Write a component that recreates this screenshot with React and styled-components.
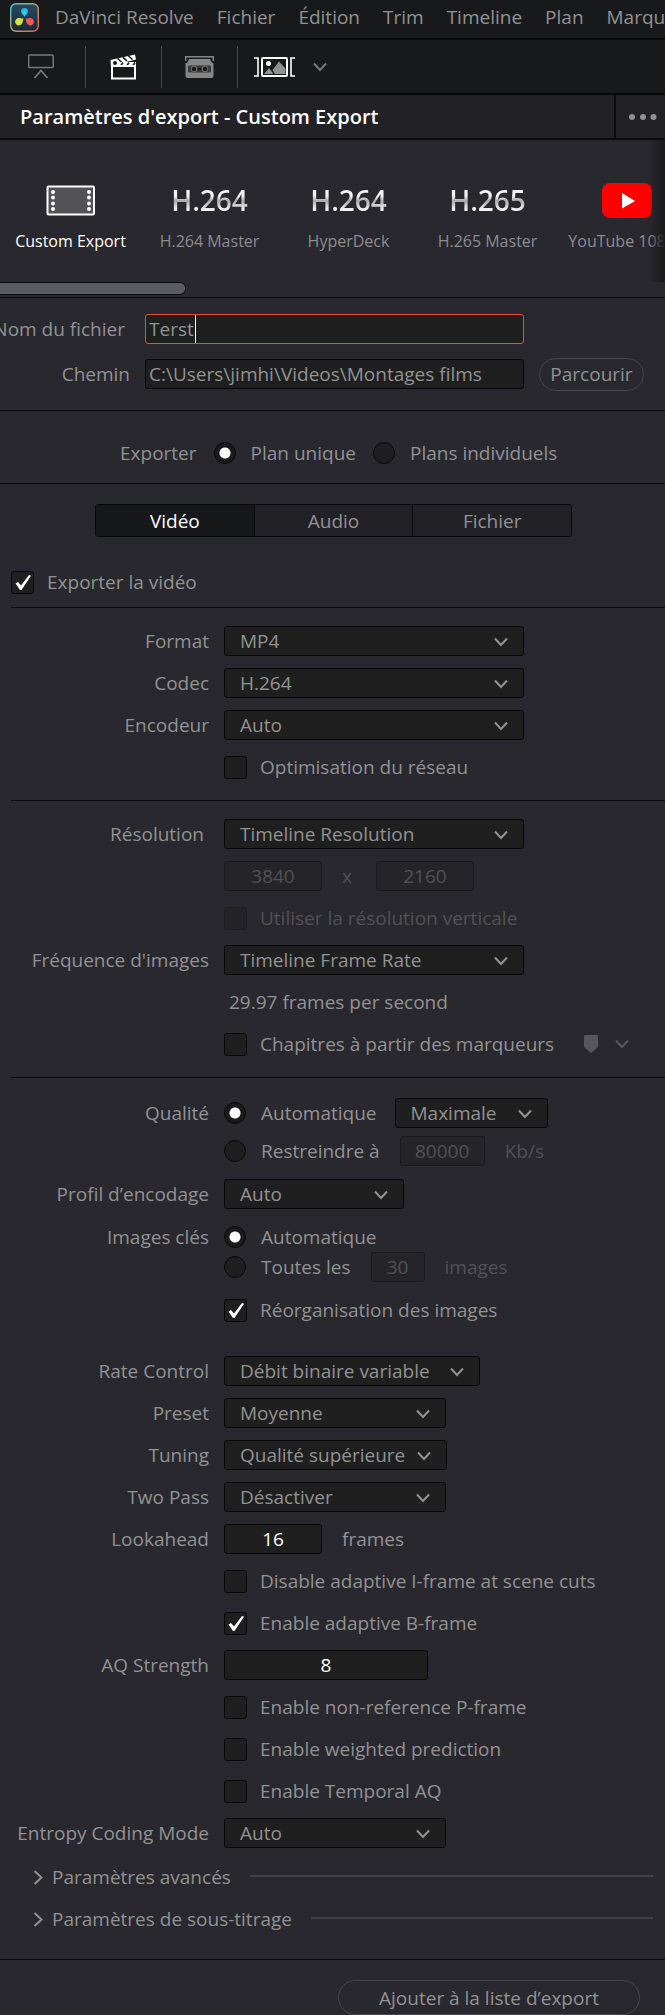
import React, { useId, useState } from 'react'
import styled, { createGlobalStyle, css } from 'styled-components'

const GlobalStyle = createGlobalStyle`
  * {
    box-sizing: border-box;
  }

  body {
    margin: 0;
    background: #28282e;
    color: #929292;
    font-family: 'Open Sans', 'Noto Sans', sans-serif;
    font-size: 19px;
    line-height: 30px;
    overflow-x: hidden;
  }

  button,
  input,
  select {
    font: inherit;
    color: inherit;
    margin: 0;
  }
`

const Page = styled.div`
  min-height: 100vh;
  overflow: hidden;
`

const MenuBar = styled.nav`
  display: flex;
  align-items: center;
  gap: 23px;
  height: 40px;
  padding: 0 0 4px 10px;
  background: #18191a;
  border-bottom: 2px solid #090909;
  white-space: nowrap;
  overflow: hidden;
`

const MenuLogo = styled.svg`
  flex: none;
  width: 29px;
  height: 29px;
  margin-right: -7px;
`

const MenuItem = styled.a`
  color: #929292;
  text-decoration: none;
`

const Toolbar = styled.div`
  display: flex;
  align-items: center;
  height: 55px;
  background: #18191a;
  border-bottom: 2px solid #090909;
`

const ToolButton = styled.button`
  display: flex;
  align-items: center;
  justify-content: center;
  gap: 18px;
  width: ${(props) => (props.$wide ? '104px' : '76px')};
  height: 42px;
  padding: 0 0 0 ${(props) => (props.$wide ? '2px' : '0')};
  border: 0;
  border-left: ${(props) => (props.$first ? '0' : '1px solid #48484a')};
  background: none;

  &:first-child {
    width: 85px;
    padding-right: 4px;
  }
`

const TitleBar = styled.header`
  display: flex;
  align-items: stretch;
  height: 45px;
  background: #222126;
  border-bottom: 2px solid #0c0c0e;
`

const Title = styled.h1`
  flex: 1;
  margin: 0;
  padding: 7px 20px;
  color: #fff;
  font-size: 20px;
  font-weight: 600;
  line-height: 30px;
`

const MoreButton = styled.button`
  display: flex;
  align-items: center;
  justify-content: center;
  width: 51px;
  padding: 0 0 0 4px;
  border: 0;
  border-left: 2px solid #0c0c0e;
  background: none;
`

const Presets = styled.div`
  position: relative;
  height: 142px;
  overflow: hidden;
`

const PresetList = styled.div`
  display: flex;
  padding: 40px 0 0 1px;
`

const Preset = styled.button`
  display: flex;
  flex: none;
  flex-direction: column;
  align-items: center;
  gap: 9px;
  width: 139px;
  padding: 0;
  border: 0;
  background: none;
  color: ${(props) => (props.$active ? '#fff' : '#8c8c8e')};
  font-size: 16px;
  line-height: 24px;
  white-space: nowrap;
`

const PresetIcon = styled.span`
  display: flex;
  align-items: center;
  height: 40px;
`

const CodecName = styled.span`
  font-size: 28px;
  font-weight: 600;
  line-height: 40px;
  color: transparent;
  background: linear-gradient(#f4f4f4 40%, #a8a8a8 52%, #f0f0f0 72%);
  background-clip: text;
`

const PresetFade = styled.div`
  position: absolute;
  top: 0;
  right: 0;
  bottom: 0;
  width: 16px;
  background: linear-gradient(to right, rgba(24, 24, 26, 0), #1a1a1c);
`

const ScrollTrack = styled.div`
  height: 16px;
  border-bottom: 1px solid #0c0c0e;
`

const ScrollThumb = styled.div`
  width: 28%;
  height: 13px;
  border: 1px solid #0c0c0e;
  border-left: 0;
  border-radius: 0 6px 6px 0;
  background: #595d62;
`

const Target = styled.section`
  display: flex;
  flex-direction: column;
  gap: 15px;
  padding: 16px 0 21px;
  border-bottom: 1px solid #0c0c0e;
`

const Row = styled.div`
  display: flex;
  align-items: center;
  height: 30px;
  white-space: nowrap;
`

const Label = styled.label`
  display: flex;
  flex: none;
  justify-content: flex-end;
  width: ${(props) => (props.$narrow ? '145px' : '224px')};
  padding-right: ${(props) => (props.$loose ? '20px' : '15px')};
`

const fieldStyle = css`
  height: 30px;
  border: 1px solid #08080a;
  border-radius: 3px;
  background: #1f1f1f;
  line-height: 28px;
  outline: none;
`

const Field = styled.div`
  position: relative;
  display: flex;
  width: 379px;
`

const TextInput = styled.input`
  ${fieldStyle}
  width: 100%;
  padding: 0 3px;
  border-color: ${(props) => (props.$focused ? '#e64b3d' : '#08080a')};
  caret-color: transparent;
`

const Caret = styled.span`
  position: absolute;
  top: 1px;
  bottom: 1px;
  left: 50px;
  width: 1px;
  background: #fff;
`

const NumberInput = styled.input`
  ${fieldStyle}
  width: ${(props) => props.$width};
  padding: 0;
  color: #fff;
  text-align: center;

  &:disabled {
    border-color: #1b1b1f;
    background: #252529;
    color: #515155;
  }
`

const PillButton = styled.button`
  height: ${(props) => (props.$large ? '35px' : '33px')};
  width: ${(props) => (props.$large ? '302px' : '105px')};
  padding: 0;
  border: 1px solid #43464b;
  border-radius: 18px;
  background: none;
  line-height: 28px;
`

const BrowseButton = styled(PillButton)`
  margin-left: 15px;
`

const ModeRow = styled.section`
  display: flex;
  align-items: center;
  gap: 17px;
  height: 73px;
  padding: 12px 0 0 120px;
  border-bottom: 1px solid #0c0c0e;
  white-space: nowrap;
`

const Choice = styled.label`
  display: flex;
  align-items: center;
  gap: ${(props) => (props.$radio ? '15px' : '13px')};
  color: ${(props) => (props.$disabled ? '#515155' : 'inherit')};
`

const RadioInput = styled.input`
  appearance: none;
  flex: none;
  width: 22px;
  height: 22px;
  border: 1px solid #08080a;
  border-radius: 50%;
  background: #1f1f1f;

  &:checked {
    background: radial-gradient(circle, #fff 5px, #1a1a1a 6px);
  }
`

const BoxWrap = styled.span`
  display: grid;
  flex: none;
  width: 23px;
  height: 23px;

  > * {
    grid-area: 1 / 1;
  }
`

const BoxInput = styled.input`
  appearance: none;
  width: 23px;
  height: 23px;
  border: 1px solid #08080a;
  border-radius: 3px;
  background: #1f1f1f;

  &:disabled {
    border-color: #1f1f23;
    background: #242428;
  }
`

const Tick = styled.svg`
  width: 23px;
  height: 23px;
  pointer-events: none;
`

const Tabs = styled.div`
  display: flex;
  width: calc(100% - 188px);
  height: 33px;
  margin: 20px 93px 0 95px;
  border: 1px solid #08080a;
  border-radius: 3px;
  overflow: hidden;
`

const Tab = styled.button`
  flex: 1;
  padding: 0;
  border: 0;
  border-left: 1px solid #0c0c0e;
  background: ${(props) => (props.$active ? '#17181a' : '#222126')};
  color: ${(props) => (props.$active ? '#fff' : 'inherit')};
  line-height: 30px;

  &:first-child {
    border-left: 0;
  }
`

const Master = styled.div`
  display: flex;
  align-items: center;
  height: 41px;
  margin: 30px 0 0 11px;
  padding-bottom: 10px;
  border-bottom: 1px solid #0c0c0e;
`

const Settings = styled.section`
  display: flex;
  flex-direction: column;
  gap: ${(props) => (props.$last ? '13px' : '12px')};
  margin-left: ${(props) => (props.$last ? '0' : '11px')};
  padding: ${(props) => (props.$last ? '20px 0 26px' : '18px 0')};
  border-bottom: 1px solid #0c0c0e;

  ${Label} {
    margin-left: ${(props) => (props.$last ? '0' : '-11px')};
  }
`

const Group = styled.div`
  display: flex;
  flex-direction: column;
  gap: ${(props) => props.$gap};
`

const Encoder = styled(Group)`
  margin-top: 18px;
`

const SelectWrap = styled.div`
  position: relative;
  width: ${(props) => props.$width};

  svg {
    position: absolute;
    top: 11px;
    right: 16px;
    pointer-events: none;
  }
`

const SelectInput = styled.select`
  ${fieldStyle}
  appearance: none;
  width: 100%;
  padding: 0 10px 0 15px;
`

const Aside = styled.span`
  margin-left: 20px;
  color: ${(props) => (props.$dim ? '#515155' : 'inherit')};
`

const Inline = styled.div`
  display: flex;
  margin-left: ${(props) => props.$gap};
`

const Note = styled.span`
  padding-left: 5px;
`

const MarkerButton = styled.button`
  display: flex;
  align-items: center;
  gap: 15px;
  margin-left: 29px;
  padding: 0;
  border: 0;
  background: none;
`

const Disclosure = styled.button`
  display: flex;
  align-items: center;
  gap: 9px;
  height: 30px;
  padding: 2px 12px 0 33px;
  border: 0;
  background: none;

  &::after {
    content: '';
    flex: 1;
    height: 2px;
    margin: 0 0 2px 10px;
    background: #424147;
  }
`

const Footer = styled.footer`
  display: flex;
  justify-content: flex-end;
  padding: 20px 25px 0 0;
`

function Chevron({ color = '#929292' }) {
  return (
    <svg width="14" height="10" viewBox="0 0 14 10" fill="none">
      <path d="M1 1.5 7 8l6-6.5" stroke={color} strokeWidth="2" />
    </svg>
  )
}

function Logo() {
  return (
    <MenuLogo viewBox="0 0 29 29">
      <defs>
        <linearGradient id="logoEdge" x1="0" y1="0" x2="1" y2="1">
          <stop offset="0" stopColor="#49cbd2" />
          <stop offset="0.5" stopColor="#b0a56c" />
          <stop offset="1" stopColor="#ef5350" />
        </linearGradient>
        <linearGradient id="logoBase" x1="0" y1="0" x2="0" y2="1">
          <stop offset="0" stopColor="#2b4a60" />
          <stop offset="1" stopColor="#1b2733" />
        </linearGradient>
        <radialGradient id="logoBlue">
          <stop offset="0" stopColor="#38d5f5" />
          <stop offset="1" stopColor="#1fb0e0" />
        </radialGradient>
      </defs>
      <rect x="0.7" y="0.7" width="27.6" height="27.6" rx="5.5" fill="url(#logoBase)" stroke="url(#logoEdge)" strokeWidth="1.4" />
      <path d="M14.5 14c-1-2.2-3.5-3-3.5-5.5a3.5 3.5 0 0 1 7 0c0 2.5-2.5 3.3-3.5 5.5z" fill="url(#logoBlue)" />
      <path d="M13.5 15.3c-1 2.3-.2 4-2 6a3.7 3.7 0 1 1-4-6c2.2-.8 4 .7 6 0z" fill="#d5e042" />
      <path d="M15.5 15.3c1 2.3.2 4 2 6a3.7 3.7 0 1 0 4-6c-2.2-.8-4 .7-6 0z" fill="#ee5a58" />
    </MenuLogo>
  )
}

function TrayIcon() {
  return (
    <svg width="26" height="26" viewBox="0 0 26 26" fill="none" stroke="#77787a">
      <rect x="0.7" y="1" width="24.5" height="12.5" rx="1" strokeWidth="1.5" />
      <path d="m6.5 24 6.5-7.5 6.5 7.5" strokeWidth="1.8" />
    </svg>
  )
}

function ClapIcon() {
  return (
    <svg width="27" height="26" viewBox="0 0 27 26">
      <path d="M0.5 6 25 .5l1 5-10 2.5H26v5H1z" fill="#fff" />
      <path d="m7.5 4.5 4 3.5M13 3.3l4 3.5M18.5 2l4 3.5M10 13l3-4.5M16 13l3-4.5M22 13l3-4.5" stroke="#18191a" strokeWidth="1.6" />
      <circle cx="5" cy="9" r="2" fill="#18191a" />
      <path d="M2 12v12.5h23V12z" fill="none" stroke="#fff" strokeWidth="2" />
    </svg>
  )
}

function TapeIcon() {
  return (
    <svg width="29" height="22" viewBox="0 0 29 22">
      <path d="M.7 5V.8h27.6V5" fill="none" stroke="#858585" strokeWidth="1.5" />
      <path d="M4 3h21l2 4h1.5v13a2 2 0 0 1-2 2h-24a2 2 0 0 1-2-2V7H2z" fill="#858585" />
      <rect x="3" y="9.5" width="23" height="7" rx="1" fill="#3a3a3b" />
      <circle cx="9" cy="13" r="3.2" fill="#6a6a6b" />
      <circle cx="20" cy="13" r="3.2" fill="#6a6a6b" />
      <circle cx="9" cy="13" r="2.2" fill="#18191a" />
      <circle cx="20" cy="13" r="2.2" fill="#18191a" />
      <path d="M13 13h3" stroke="#18191a" strokeWidth="2" />
    </svg>
  )
}

function StillIcon() {
  return (
    <svg width="41" height="22" viewBox="0 0 41 22">
      <path d="M0 2h4v18H0M41 2h-4v18h4" fill="none" stroke="#fff" strokeWidth="1.6" />
      <rect x="8" y="2" width="25" height="18" rx="1" fill="none" stroke="#fff" strokeWidth="2" />
      <circle cx="14.5" cy="7.5" r="2.5" fill="#fff" />
      <path d="m10 18 5-6 4.5 6zM18.5 14 25 5.5l6.5 7V18H21z" fill="#929292" />
    </svg>
  )
}

function FilmIcon() {
  return (
    <svg width="50" height="31" viewBox="0 0 50 31">
      <rect x="1.5" y="1.5" width="46.5" height="28" rx="1" fill="#535357" stroke="#fff" strokeWidth="2" />
      {[7, 12.5, 18.5, 24].map((y) => (
        <g key={y} fill="#fff">
          <circle cx="7" cy={y} r="2" />
          <circle cx="43" cy={y} r="2" />
        </g>
      ))}
    </svg>
  )
}

function YouTubeIcon() {
  return (
    <svg width="50" height="35" viewBox="0 0 50 35">
      <rect width="50" height="35" rx="8" fill="#f00" />
      <path d="M20 10v15.5l13-7.5z" fill="#fff" />
    </svg>
  )
}

function Check({ label, checked = false, disabled }) {
  const [on, setOn] = useState(checked)

  return (
    <Choice $disabled={disabled}>
      <BoxWrap>
        <BoxInput
          type="checkbox"
          checked={on}
          disabled={disabled}
          onChange={(e) => setOn(e.target.checked)}
        />
        {on && (
          <Tick viewBox="0 0 23 23">
            <path d="M4.5 12.5 7 11l3 3.5L18 4l2 .8L10.5 19H9z" fill="#fff" />
          </Tick>
        )}
      </BoxWrap>
      {label}
    </Choice>
  )
}

function Radio({ name, label, checked }) {
  return (
    <Choice $radio>
      <RadioInput type="radio" name={name} defaultChecked={checked} />
      {label}
    </Choice>
  )
}

function Select({ id, value, width = '300px', label }) {
  return (
    <SelectWrap $width={width}>
      <SelectInput id={id} aria-label={label} defaultValue={value}>
        <option>{value}</option>
      </SelectInput>
      <Chevron />
    </SelectWrap>
  )
}

function SelectRow({ label, value, width, loose }) {
  const id = useId()

  return (
    <Row>
      <Label htmlFor={id} $loose={loose}>
        {label}
      </Label>
      <Select id={id} value={value} width={width} />
    </Row>
  )
}

function NumberRow({ label, value, width, unit }) {
  const id = useId()

  return (
    <Row>
      <Label htmlFor={id}>{label}</Label>
      <NumberInput id={id} defaultValue={value} $width={width} />
      {unit && <Aside>{unit}</Aside>}
    </Row>
  )
}

function CheckRow({ children, ...rest }) {
  return (
    <Row>
      <Label as="span" />
      <Check {...rest} />
      {children}
    </Row>
  )
}

const menus = ['DaVinci Resolve', 'Fichier', 'Édition', 'Trim', 'Timeline', 'Plan', 'Marqueurs']

const presets = [
  { label: 'Custom Export', icon: <FilmIcon /> },
  { label: 'H.264 Master', codec: 'H.264' },
  { label: 'HyperDeck', codec: 'H.264' },
  { label: 'H.265 Master', codec: 'H.265' },
  { label: 'YouTube 1080p', icon: <YouTubeIcon /> },
]

const tabs = ['Vidéo', 'Audio', 'Fichier']

export default function App() {
  const [preset, setPreset] = useState('Custom Export')
  const [tab, setTab] = useState('Vidéo')

  return (
    <Page>
      <GlobalStyle />
      <MenuBar>
        <Logo />
        {menus.map((item) => (
          <MenuItem key={item} href="#">
            {item}
          </MenuItem>
        ))}
      </MenuBar>

      <Toolbar>
        <ToolButton $first aria-label="Tray">
          <TrayIcon />
        </ToolButton>
        <ToolButton aria-label="Render">
          <ClapIcon />
        </ToolButton>
        <ToolButton aria-label="Tape">
          <TapeIcon />
        </ToolButton>
        <ToolButton $wide aria-label="Clips">
          <StillIcon />
          <Chevron color="#77787a" />
        </ToolButton>
      </Toolbar>

      <TitleBar>
        <Title>Paramètres d'export - Custom Export</Title>
        <MoreButton aria-label="Options">
          <svg width="28" height="6" viewBox="0 0 28 6" fill="#929292">
            <circle cx="3" cy="3" r="3" />
            <circle cx="14" cy="3" r="3" />
            <circle cx="24.5" cy="3" r="3" />
          </svg>
        </MoreButton>
      </TitleBar>

      <Presets>
        <PresetList>
          {presets.map((item) => (
            <Preset
              key={item.label}
              $active={item.label === preset}
              onClick={() => setPreset(item.label)}
            >
              <PresetIcon>
                {item.codec ? <CodecName>{item.codec}</CodecName> : item.icon}
              </PresetIcon>
              {item.label}
            </Preset>
          ))}
        </PresetList>
        <PresetFade />
      </Presets>
      <ScrollTrack>
        <ScrollThumb />
      </ScrollTrack>

      <Target>
        <Row>
          <Label htmlFor="filename" $narrow $loose>
            Nom du fichier
          </Label>
          <Field>
            <TextInput id="filename" defaultValue="Terst" $focused />
            <Caret />
          </Field>
        </Row>
        <Row>
          <Label htmlFor="path" $narrow>
            Chemin
          </Label>
          <Field>
            <TextInput id="path" defaultValue="C:\Users\jimhi\Videos\Montages films" />
          </Field>
          <BrowseButton>Parcourir</BrowseButton>
        </Row>
      </Target>

      <ModeRow>
        <span>Exporter</span>
        <Radio name="mode" label="Plan unique" checked />
        <Radio name="mode" label="Plans individuels" />
      </ModeRow>

      <Tabs>
        {tabs.map((item) => (
          <Tab key={item} $active={item === tab} onClick={() => setTab(item)}>
            {item}
          </Tab>
        ))}
      </Tabs>

      <Master>
        <Check label="Exporter la vidéo" checked />
      </Master>

      <Settings>
        <SelectRow label="Format" value="MP4" />
        <SelectRow label="Codec" value="H.264" />
        <SelectRow label="Encodeur" value="Auto" />
        <CheckRow label="Optimisation du réseau" />
      </Settings>

      <Settings>
        <SelectRow label="Résolution" value="Timeline Resolution" loose />
        <Row>
          <Label as="span" />
          <NumberInput aria-label="Largeur" defaultValue="3840" $width="98px" disabled />
          <Aside $dim>x</Aside>
          <Inline $gap="24px">
            <NumberInput aria-label="Hauteur" defaultValue="2160" $width="98px" disabled />
          </Inline>
        </Row>
        <CheckRow label="Utiliser la résolution verticale" disabled />
        <SelectRow label="Fréquence d'images" value="Timeline Frame Rate" />
        <Row>
          <Label as="span" />
          <Note>29.97 frames per second</Note>
        </Row>
        <CheckRow label="Chapitres à partir des marqueurs">
          <MarkerButton aria-label="Couleur du marqueur">
            <svg width="17" height="18" viewBox="0 0 17 18">
              <path d="M3 0h10q2 0 2 2v10l-7 6-7-6V2q0-2 2-2z" fill="#57575b" />
            </svg>
            <Chevron color="#57575b" />
          </MarkerButton>
        </CheckRow>
      </Settings>

      <Settings $last>
        <Group $gap="8px">
          <Row>
            <Label as="span">Qualité</Label>
            <Radio name="quality" label="Automatique" checked />
            <Inline $gap="18px">
              <Select label="Niveau de qualité" value="Maximale" width="153px" />
            </Inline>
          </Row>
          <Row>
            <Label as="span" />
            <Radio name="quality" label="Restreindre à" />
            <Inline $gap="20px">
              <NumberInput aria-label="Débit" defaultValue="80000" $width="85px" disabled />
            </Inline>
            <Aside $dim>Kb/s</Aside>
          </Row>
        </Group>
        <SelectRow label="Profil d’encodage" value="Auto" width="180px" />
        <Group $gap="0">
          <Row>
            <Label as="span">Images clés</Label>
            <Radio name="keyframes" label="Automatique" checked />
          </Row>
          <Row>
            <Label as="span" />
            <Radio name="keyframes" label="Toutes les" />
            <Inline $gap="20px">
              <NumberInput aria-label="Intervalle" defaultValue="30" $width="54px" disabled />
            </Inline>
            <Aside $dim>images</Aside>
          </Row>
        </Group>
        <CheckRow label="Réorganisation des images" checked />

        <Encoder $gap="12px">
          <SelectRow label="Rate Control" value="Débit binaire variable" width="256px" />
          <SelectRow label="Preset" value="Moyenne" width="222px" />
          <SelectRow label="Tuning" value="Qualité supérieure" width="223px" />
          <SelectRow label="Two Pass" value="Désactiver" width="222px" />
          <NumberRow label="Lookahead" value="16" width="98px" unit="frames" />
          <CheckRow label="Disable adaptive I-frame at scene cuts" />
          <CheckRow label="Enable adaptive B-frame" checked />
          <NumberRow label="AQ Strength" value="8" width="204px" />
          <CheckRow label="Enable non-reference P-frame" />
          <CheckRow label="Enable weighted prediction" />
          <CheckRow label="Enable Temporal AQ" />
          <SelectRow label="Entropy Coding Mode" value="Auto" width="222px" />
        </Encoder>

        <Group $gap="12px">
          {['Paramètres avancés', 'Paramètres de sous-titrage'].map((item) => (
            <Disclosure key={item}>
              <svg width="10" height="15" viewBox="0 0 10 15" fill="none">
                <path d="m1.5 1 7 6.5-7 6.5" stroke="#929292" strokeWidth="2" />
              </svg>
              {item}
            </Disclosure>
          ))}
        </Group>
      </Settings>

      <Footer>
        <PillButton $large>Ajouter à la liste d’export</PillButton>
      </Footer>
    </Page>
  )
}
